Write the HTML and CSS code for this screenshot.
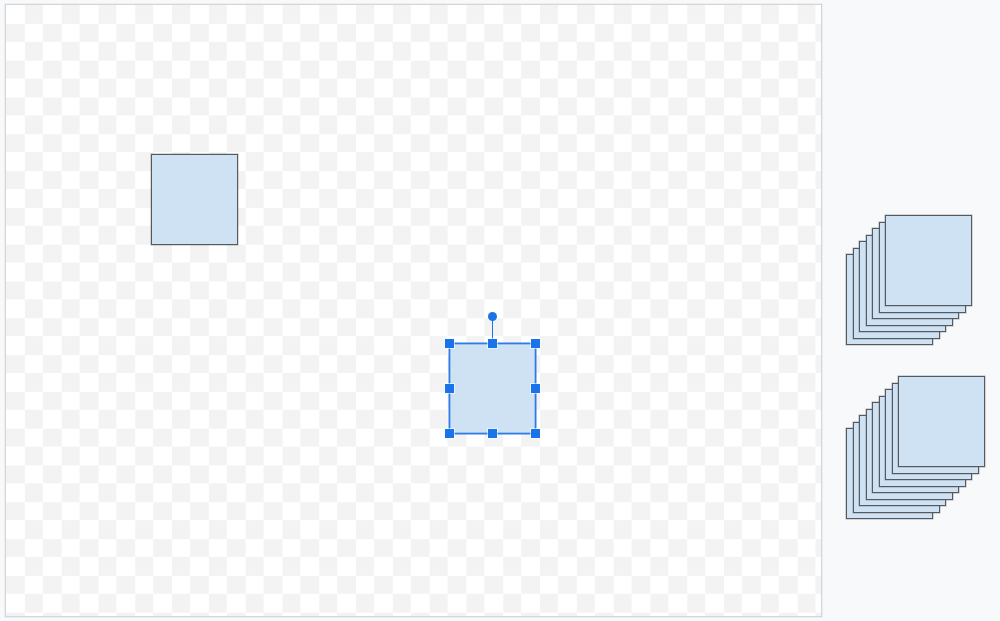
FILE: index.html
```html
<!DOCTYPE html>
<html lang="en">
<head>
<meta charset="utf-8">
<title>Shape board</title>
<link rel="stylesheet" href="styles.css">
</head>
<body>
<div class="app">
  <main class="canvas">
    <div class="shape shape-a"></div>
    <div class="shape shape-b is-selected">
      <span class="rotate"></span>
      <span class="handle h-nw"></span>
      <span class="handle h-n"></span>
      <span class="handle h-ne"></span>
      <span class="handle h-w"></span>
      <span class="handle h-e"></span>
      <span class="handle h-sw"></span>
      <span class="handle h-s"></span>
      <span class="handle h-se"></span>
    </div>
  </main>
  <aside class="tray">
    <div class="stack stack-7">
      <div class="card"></div><div class="card"></div><div class="card"></div>
      <div class="card"></div><div class="card"></div><div class="card"></div>
      <div class="card"></div>
    </div>
    <div class="stack stack-9">
      <div class="card"></div><div class="card"></div><div class="card"></div>
      <div class="card"></div><div class="card"></div><div class="card"></div>
      <div class="card"></div><div class="card"></div><div class="card"></div>
    </div>
  </aside>
</div>
</body>
</html>
```

FILE: styles.css
```css
* { box-sizing: border-box; }

html, body {
  margin: 0;
  height: 100%;
  background: #f8f9fb;
  font-family: "Liberation Sans", Arial, sans-serif;
}

.app {
  display: flex;
  align-items: flex-start;
  padding: 4px 0 0 5px;
}

/* drawing surface with a light checkerboard */
.canvas {
  position: relative;
  flex: none;
  width: 817px;
  height: 613px;
  border: 1px solid #d5d6d8;
  box-shadow: 0 0 0 1px #eceef1;
  background-color: #ffffff;
  background-image: conic-gradient(#f3f3f3 0 25%, #ffffff 0 50%, #f3f3f3 0 75%, #ffffff 0);
  background-size: 36.8px 36.8px;
  background-position: 0 0;
  overflow: hidden;
}

.shape {
  position: absolute;
  width: 87px;
  height: 91px;
  background: #cfe2f3;
  border: 1px solid #555a60;
  box-shadow: 0 0 0 0.5px rgba(85, 90, 96, 0.45);
}

.shape-a { left: 145px; top: 149px; }
.shape-b { left: 443px; top: 338px; }

.shape.is-selected {
  border: 1px solid #2f7be6;
  box-shadow: 0 0 0 1px rgba(26, 115, 232, 0.45), inset 0 0 0 1px rgba(26, 115, 232, 0.3);
}

.handle {
  position: absolute;
  width: 9px;
  height: 9px;
  background: #1a73e8;
  box-shadow: 0 0 0 1px rgba(255, 255, 255, 0.55);
}

.h-nw { left: -5px; top: -5px; }
.h-n  { left: 38px; top: -5px; }
.h-ne { right: -5px; top: -5px; }
.h-w  { left: -5px; top: 40px; }
.h-e  { right: -5px; top: 40px; }
.h-sw { left: -5px; bottom: -5px; }
.h-s  { left: 38px; bottom: -5px; }
.h-se { right: -5px; bottom: -5px; }

/* rotation knob above the top edge */
.rotate {
  position: absolute;
  left: 42px;
  top: -27px;
  width: 1px;
  height: 23px;
  background: #1a73e8;
}

.rotate::before {
  content: "";
  position: absolute;
  left: -4px;
  top: -5px;
  width: 9px;
  height: 9px;
  border-radius: 50%;
  background: #1a73e8;
}

/* side tray of stacked shape piles */
.tray {
  flex: 1;
  display: flex;
  flex-direction: column;
  gap: 31px;
  padding: 211px 0 0 24px;
}

.stack {
  display: grid;
  align-self: flex-start;
}

.card {
  grid-area: 1 / 1;
  width: 87px;
  height: 91px;
  background: #cfe2f3;
  border: 1px solid #555a60;
  box-shadow: 0 0 0 0.5px rgba(85, 90, 96, 0.45);
  margin-left: calc(var(--i) * 6.5px);
  margin-top: calc((var(--n) - 1 - var(--i)) * 6.5px);
}

.stack-7 { --n: 7; }
.stack-9 { --n: 9; }

.card:nth-child(1) { --i: 0; }
.card:nth-child(2) { --i: 1; }
.card:nth-child(3) { --i: 2; }
.card:nth-child(4) { --i: 3; }
.card:nth-child(5) { --i: 4; }
.card:nth-child(6) { --i: 5; }
.card:nth-child(7) { --i: 6; }
.card:nth-child(8) { --i: 7; }
.card:nth-child(9) { --i: 8; }
```
